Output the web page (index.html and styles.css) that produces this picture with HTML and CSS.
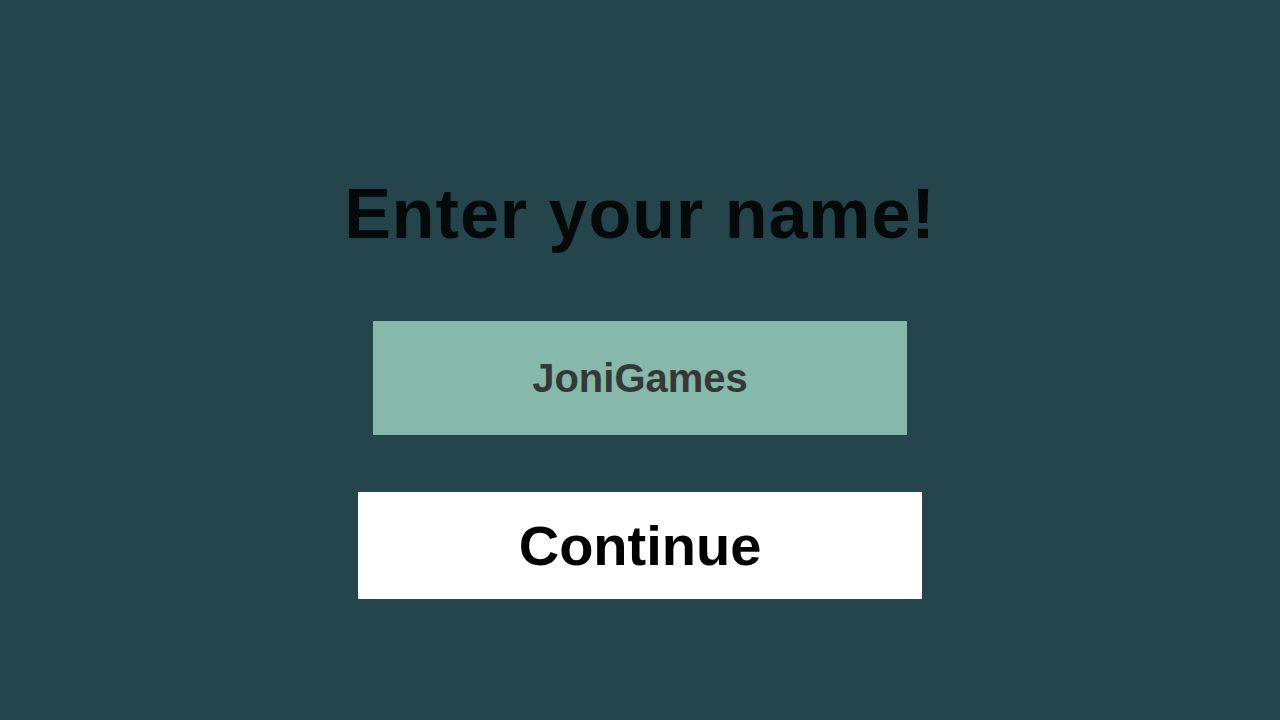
FILE: index.html
```html
<!DOCTYPE html>
<html lang="en">
<head>
<meta charset="utf-8">
<title>Enter your name</title>
<link rel="stylesheet" href="styles.css">
</head>
<body>
<main class="screen">
  <h1 class="title">Enter your name!</h1>
  <input class="name-input" type="text" value="JoniGames">
  <button class="continue-btn" type="button">Continue</button>
</main>
</body>
</html>
```

FILE: styles.css
```css
html, body {
  margin: 0;
  padding: 0;
}
body {
  width: 1280px;
  height: 720px;
  background: #24454b;
  font-family: "Liberation Sans", Arial, sans-serif;
  overflow: hidden;
}
.screen {
  display: flex;
  flex-direction: column;
  align-items: center;
  padding-top: 179px;
}
.title {
  margin: 0;
  font-size: 70px;
  line-height: 70px;
  font-weight: 700;
  color: #050909;
  letter-spacing: 1px;
}
.name-input {
  margin-top: 72px;
  width: 534px;
  height: 114px;
  box-sizing: border-box;
  border: none;
  outline: none;
  padding: 0;
  background: #86b9aa;
  color: #363838;
  font-family: "Liberation Sans", Arial, sans-serif;
  font-weight: 700;
  font-size: 40px;
  text-align: center;
}
.continue-btn {
  margin-top: 57px;
  width: 564px;
  height: 107px;
  border: none;
  padding: 0;
  background: #ffffff;
  color: #000000;
  font-family: "Liberation Sans", Arial, sans-serif;
  font-weight: 700;
  font-size: 56px;
  cursor: pointer;
}
```
